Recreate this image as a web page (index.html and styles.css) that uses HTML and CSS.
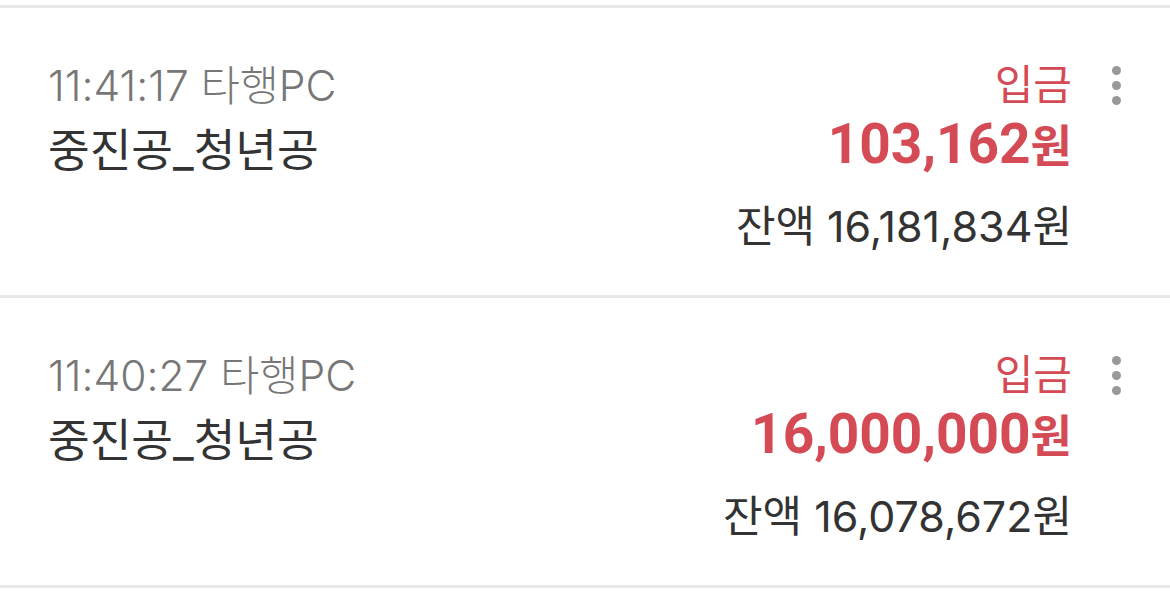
FILE: index.html
```html
<!DOCTYPE html>
<html lang="ko">
<head>
<meta charset="utf-8">
<link rel="stylesheet" href="styles.css">
</head>
<body>
<div class="list">
  <div class="row">
    <div class="left">
      <div class="time">11:41:17 타행PC</div>
      <div class="name">중진공_청년공</div>
    </div>
    <div class="right">
      <div class="type">입금</div>
      <div class="amount">103,162<span class="won">원</span></div>
      <div class="balance">잔액 16,181,834원</div>
    </div>
    <div class="more"><span></span><span></span><span></span></div>
  </div>
  <div class="row">
    <div class="left">
      <div class="time">11:40:27 타행PC</div>
      <div class="name">중진공_청년공</div>
    </div>
    <div class="right">
      <div class="type">입금</div>
      <div class="amount">16,000,000<span class="won">원</span></div>
      <div class="balance">잔액 16,078,672원</div>
    </div>
    <div class="more"><span></span><span></span><span></span></div>
  </div>
  <div class="end"></div>
</div>
</body>
</html>
```
FILE: styles.css
```css
* { box-sizing: border-box; }
html, body { margin: 0; padding: 0; background: #fff; }
body {
  font-family: Inter, "Noto Sans CJK KR", sans-serif;
  color: #333;
}
.list { padding-top: 5px; }
.row {
  display: flex;
  align-items: flex-start;
  height: 290px;
  border-top: 3px solid #e8e8e8;
  padding: 48px 0 0 48px;
}
.left { flex: 1; }
.time {
  font-size: 42.5px;
  line-height: 60px;
  font-weight: 300;
  color: #777;
}
.name {
  font-size: 45.3px;
  line-height: 70px;
  color: #333;
}
.right {
  text-align: right;
}
.type {
  font-size: 42px;
  line-height: 57px;
  color: #d54b55;
}
.amount {
  font-family: Roboto, "Noto Sans CJK KR", sans-serif;
  font-size: 55px;
  line-height: 62px;
  font-weight: 700;
  color: #d54b55;
}
.won { font-size: 45px; }
.balance {
  font-size: 43px;
  line-height: 95px;
  color: #333;
}
.more {
  width: 98px;
  display: flex;
  flex-direction: column;
  align-items: flex-start;
  gap: 6px;
  padding: 10px 0 0 40px;
}
.more span {
  width: 9px;
  height: 9px;
  border-radius: 50%;
  background: #999;
}
.end { border-top: 3px solid #e8e8e8; }
```
